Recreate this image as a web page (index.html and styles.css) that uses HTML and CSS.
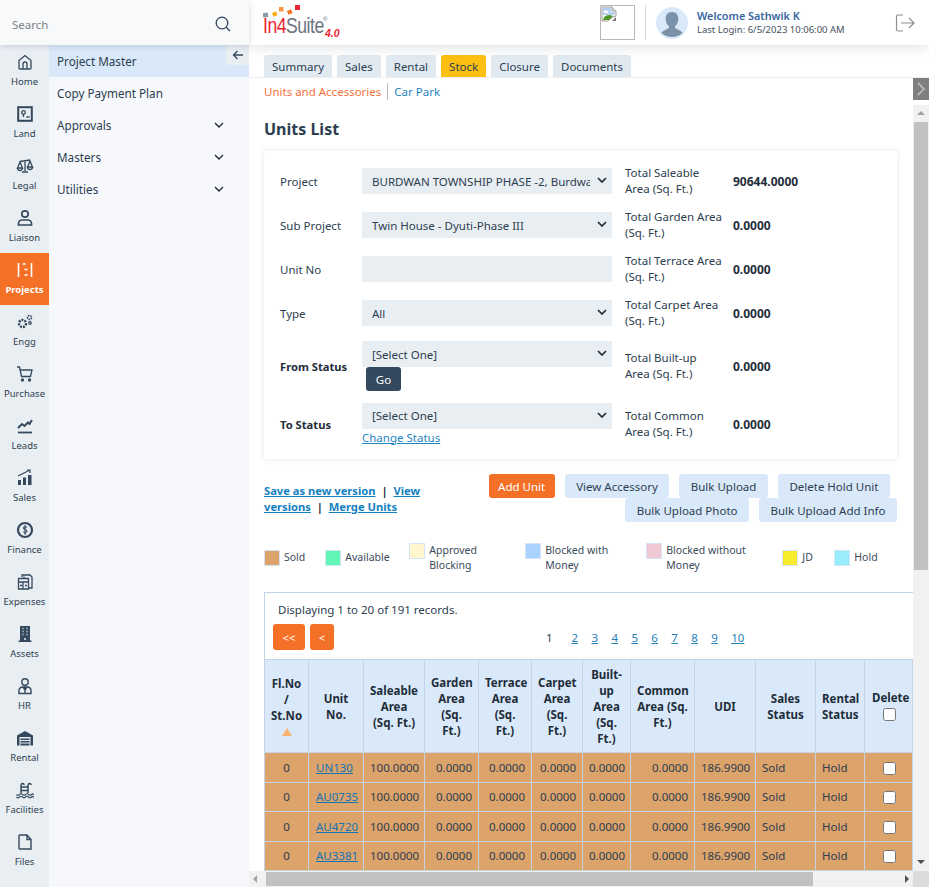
FILE: index.html
```html
<!DOCTYPE html>
<html lang="en">
<head>
    <meta charset="UTF-8">
    <title>Units List</title>
    <link rel="stylesheet" href="styles.css">
</head>
<body>
<div class="app">
    <aside class="left">
        <div class="search">
            <span class="search-text">Search</span>
            <svg class="search-icon" viewBox="0 0 16 16" width="16" height="16"><circle cx="7" cy="7" r="5.8"/><path d="M11.2 11.2 15 15"/></svg>
        </div>
        <div class="left-body">
            <nav class="rail">
                <a class="rail-item"><svg viewBox="0 0 18 18"><path d="M3 7.5 9 2.5l6 5V15a1 1 0 0 1-1 1H4a1 1 0 0 1-1-1z"/><path d="M7 16v-5a2 2 0 0 1 4 0v5"/></svg>Home</a>
                <a class="rail-item"><svg viewBox="0 0 18 18"><rect x="2.2" y="2.2" width="13.6" height="13.6" stroke-width="2"/><circle cx="7.5" cy="7.5" r="1.8"/><path d="M7.5 9.5v2.5M10.5 12h3"/></svg>Land</a>
                <a class="rail-item"><svg viewBox="0 0 18 18"><path d="M9 3v11M6 15h6M4 4.5 14 3M4 5 1.5 11h5zM14 4l-2.5 6h5z"/><path d="M1.5 11a2.5 2.5 0 0 0 5 0M11.5 10a2.5 2.5 0 0 0 5 0"/></svg>Legal</a>
                <a class="rail-item"><svg viewBox="0 0 18 18"><circle cx="9" cy="5" r="3.2" stroke-width="1.7"/><path d="M2.5 16v-1.5A3.5 3.5 0 0 1 6 11h6a3.5 3.5 0 0 1 3.5 3.5V16z" stroke-width="1.7"/></svg>Liaison</a>
                <a class="rail-item active"><svg viewBox="0 0 18 18"><path d="M2.5 2v14M15.5 2v14M6.5 3h3M8.5 8.5h3M8.5 14h3" stroke-width="1.6"/></svg>Projects</a>
                <a class="rail-item"><svg viewBox="0 0 18 18"><circle cx="6.5" cy="10.5" r="3.5" stroke-width="2.4" stroke-dasharray="2 1"/><circle cx="13.5" cy="4.5" r="2" stroke-width="1.6" stroke-dasharray="1.5 .8"/><circle cx="14" cy="10" r="1.3" stroke-width="1.2"/></svg>Engg</a>
                <a class="rail-item"><svg viewBox="0 0 18 18"><path d="M1 2h2.5l2 9.5h9L16 5H4.5"/><circle cx="6.5" cy="15" r="1" fill="#34495e"/><circle cx="13.5" cy="15" r="1" fill="#34495e"/></svg>Purchase</a>
                <a class="rail-item"><svg viewBox="0 0 18 18"><path d="M2 11l4-4 2.5 2L12 5.5l1.5 1.5L16 3" stroke-width="2"/><path d="M2 15.5h14" stroke-width="1.8"/></svg>Leads</a>
                <a class="rail-item"><svg viewBox="0 0 18 18"><path class="solid" d="M2 11h3v5H2zM7 8.5h3V16H7zM12 6h3.5v10H12z"/><path d="M2 7 8 4l5-2.5M11 1h3v3" stroke-width="1.2"/></svg>Sales</a>
                <a class="rail-item"><svg viewBox="0 0 18 18"><circle cx="9" cy="9" r="7" stroke-width="2.2"/><path d="M11 6.3C10 5.4 7.5 5.5 7.5 7c0 1.8 3.5 1.3 3.5 3.2 0 1.5-2.5 1.6-3.7.7M9 4v10" stroke-width="1.1"/></svg>Finance</a>
                <a class="rail-item"><svg viewBox="0 0 18 18"><path d="M6 4V2h8l2 2v11h-3M2.5 5.5h10V16h-10zM2.5 9h10M7 9v7M4 12.5h2M9 12.5h2M8 5V3.5" stroke-width="1.3"/></svg>Expenses</a>
                <a class="rail-item"><svg viewBox="0 0 18 18"><path class="solid" d="M4 1h10v14.5h1.5V17h-13v-1.5H4z"/><path class="holes" d="M6.5 3.5h1M10.5 3.5h1M6.5 6.5h1M10.5 6.5h1M6.5 9.5h1M10.5 9.5h1M8 14h2" stroke-width="1.3"/></svg>Assets</a>
                <a class="rail-item"><svg viewBox="0 0 18 18"><circle cx="9" cy="5" r="3.2" stroke-width="1.4"/><path d="M3 16.5v-3A3.5 3.5 0 0 1 6.5 10h5a3.5 3.5 0 0 1 3.5 3.5v3zM9 10v6.5M7 10l2 3 2-3" stroke-width="1.4"/></svg>HR</a>
                <a class="rail-item"><svg viewBox="0 0 18 18"><path class="solid" d="M1 16.5v-10L9 2l8 4.5v10h-2.5V8h-11v8.5z"/><path class="solid" d="M4.5 9.5h9V11h-9zM4.5 12h9v1.5h-9zM4.5 14.5h9v2h-9z"/></svg>Rental</a>
                <a class="rail-item"><svg viewBox="0 0 18 18"><path d="M5 12V4.500C5 2 8 2 8 4M12 12V4.500C12 2 15 2 15 4M5 6h7M5 9.500h7" stroke-width="1.5"/><path d="M.5 13.5q1.500 1.500 3 0t3 0 3 0 3 0 3 0 2 .5M.5 16q1.500 1.500 3 0t3 0 3 0 3 0 3 0 2 .5" stroke-width="1.1"/></svg>Facilities</a>
                <a class="rail-item"><svg viewBox="0 0 18 18"><path d="M4 2h7l4 4.5V16H4a1 1 0 0 1-1-1V3a1 1 0 0 1 1-1zM11 2v4.5h4" stroke-width="1.4"/></svg>Files</a>
            </nav>
            <nav class="submenu">
                <button class="collapse-btn"><svg viewBox="0 0 12 12" width="12" height="12"><path d="M11 6H1.500M5.500 2 1.500 6l4 4"/></svg></button>
                <a class="sub-item current">Project Master</a>
                <a class="sub-item">Copy Payment Plan</a>
                <a class="sub-item">Approvals<svg viewBox="0 0 10 6" width="10" height="6"><path d="M1 1l4 4 4-4"/></svg></a>
                <a class="sub-item">Masters<svg viewBox="0 0 10 6" width="10" height="6"><path d="M1 1l4 4 4-4"/></svg></a>
                <a class="sub-item">Utilities<svg viewBox="0 0 10 6" width="10" height="6"><path d="M1 1l4 4 4-4"/></svg></a>
            </nav>
        </div>
    </aside>

    <main class="main">
        <header class="topbar">
            <div class="logo">
                <svg class="logo-dots" viewBox="0 0 40 14" width="40" height="14">
                    <rect x="0" y="8" width="5" height="4.5" fill="#8d99ae" transform="rotate(-8 2 10)"/>
                    <rect x="9.5" y="7" width="4.5" height="4" fill="#fbb016" transform="rotate(-25 12 9)"/>
                    <rect x="16" y="2" width="4.5" height="4.5" fill="#f89a3c"/>
                    <rect x="24.5" y="5" width="4.5" height="4" fill="#f47027" transform="rotate(-25 27 7)"/>
                    <rect x="32" y="0" width="5" height="5" fill="#ee2737"/>
                </svg>
                <div class="logo-word"><span class="logo-name"><span class="logo-red">In4</span>Suite</span><sup>®</sup><em>4.0</em></div>
            </div>
            <div class="broken-img">
                <svg viewBox="0 0 16 16" width="16" height="16"><path d="M1 1h10l4 4v5l-3 1-3 2-2 2H1z" fill="#fff" stroke="#9a9a9a"/><path d="M2 2h8v4h4v3H2z" fill="#b4d0f2"/><path d="M3 6c0-2 2-2 3-1 1 0 2 1 1 2H3z" fill="#fff"/><path d="M2 14c1-5 6-6 10-4l-4 4z" fill="#4f9a23"/><path d="M11 1v4h4" fill="#e4e4e4" stroke="#9a9a9a"/><path d="M11 15h4v-4z" fill="#7c7c7c"/></svg>
            </div>
            <div class="user">
                <div class="avatar">
                    <svg viewBox="0 0 32 32" width="32" height="32"><path d="M16 5c4 0 6.5 3 6.3 7-.1 3-1.2 5.500-3 7-.6 1.500 0 2.500 2 3.300 3 1.200 4.700 2.200 5.200 3.700a15.500 15.500 0 0 1-21 0c.5-1.500 2.200-2.500 5.200-3.700 2-.8 2.600-1.800 2-3.300-1.800-1.500-2.900-4-3-7C9.500 8 12 5 16 5z"/></svg>
                </div>
                <div class="user-text">
                    <div class="welcome">Welcome Sathwik K</div>
                    <div class="last-login">Last Login: 6/5/2023 10:06:00 AM</div>
                </div>
            </div>
            <svg class="logout" viewBox="0 0 20 20" width="20" height="20"><path d="M8 2H3a1.500 1.500 0 0 0-1.500 1.500v13A1.500 1.500 0 0 0 3 18h5M6 10h13M14 5l5 5-5 5"/></svg>
        </header>

        <div class="tabs">
            <a class="tab">Summary</a>
            <a class="tab">Sales</a>
            <a class="tab">Rental</a>
            <a class="tab on">Stock</a>
            <a class="tab">Closure</a>
            <a class="tab">Documents</a>
        </div>
        <div class="subtabs">
            <a class="subtab on">Units and Accessories</a>
            <a class="subtab">Car Park</a>
            <span class="side-toggle"><svg viewBox="0 0 10 14" width="10" height="14"><path d="M2 1l6 6-6 6"/></svg></span>
        </div>

        <div class="pane">
            <div class="content">
                <h1 class="page-title">Units List</h1>

                <section class="card">
                    <div class="form-row">
                        <label>Project</label>
                        <div class="sel"><select><option>BURDWAN TOWNSHIP PHASE -2, Burdwan</option></select><svg viewBox="0 0 10 6"><path d="M1 1l4 4 4-4"/></svg></div>
                        <div class="total-label">Total Saleable Area (Sq. Ft.)</div>
                        <div class="total-value">90644.0000</div>
                    </div>
                    <div class="form-row">
                        <label>Sub Project</label>
                        <div class="sel"><select><option>Twin House - Dyuti-Phase III</option></select><svg viewBox="0 0 10 6"><path d="M1 1l4 4 4-4"/></svg></div>
                        <div class="total-label">Total Garden Area (Sq. Ft.)</div>
                        <div class="total-value">0.0000</div>
                    </div>
                    <div class="form-row">
                        <label>Unit No</label>
                        <div class="sel"><input type="text"></div>
                        <div class="total-label">Total Terrace Area (Sq. Ft.)</div>
                        <div class="total-value">0.0000</div>
                    </div>
                    <div class="form-row">
                        <label>Type</label>
                        <div class="sel"><select><option>All</option></select><svg viewBox="0 0 10 6"><path d="M1 1l4 4 4-4"/></svg></div>
                        <div class="total-label">Total Carpet Area (Sq. Ft.)</div>
                        <div class="total-value">0.0000</div>
                    </div>
                    <div class="form-row tall">
                        <label class="strong">From Status</label>
                        <div>
                            <div class="sel"><select><option>[Select One]</option></select><svg viewBox="0 0 10 6"><path d="M1 1l4 4 4-4"/></svg></div>
                            <button class="go-btn">Go</button>
                        </div>
                        <div class="total-label">Total Built-up Area (Sq. Ft.)</div>
                        <div class="total-value">0.0000</div>
                    </div>
                    <div class="form-row tall">
                        <label class="strong">To Status</label>
                        <div>
                            <div class="sel"><select><option>[Select One]</option></select><svg viewBox="0 0 10 6"><path d="M1 1l4 4 4-4"/></svg></div>
                            <a class="change-link">Change Status</a>
                        </div>
                        <div class="total-label">Total Common Area (Sq. Ft.)</div>
                        <div class="total-value">0.0000</div>
                    </div>
                </section>

                <div class="actions">
                    <div class="version-links">
                        <a>Save as new version</a> &nbsp;|&nbsp; <a>View</a> <a>versions</a> &nbsp;|&nbsp; <a>Merge Units</a>
                    </div>
                    <div class="action-btns">
                        <div class="btn-row first">
                            <button class="btn primary">Add Unit</button>
                            <button class="btn">View Accessory</button>
                            <button class="btn">Bulk Upload</button>
                            <button class="btn">Delete Hold Unit</button>
                        </div>
                        <div class="btn-row">
                            <button class="btn">Bulk Upload Photo</button>
                            <button class="btn">Bulk Upload Add Info</button>
                        </div>
                    </div>
                </div>

                <div class="legend">
                    <div class="legend-item"><i class="swatch sold"></i><span>Sold</span></div>
                    <div class="legend-item"><i class="swatch available"></i><span class="w44">Available</span></div>
                    <div class="legend-item"><i class="swatch approved"></i><span class="w76">Approved Blocking</span></div>
                    <div class="legend-item"><i class="swatch money"></i><span class="w81">Blocked with Money</span></div>
                    <div class="legend-item"><i class="swatch nomoney"></i><span class="w95">Blocked without Money</span></div>
                    <div class="legend-item"><i class="swatch jd"></i><span class="w12">JD</span></div>
                    <div class="legend-item"><i class="swatch hold"></i><span>Hold</span></div>
                </div>

                <section class="grid-panel">
                    <div class="records">Displaying 1 to 20 of 191 records.</div>
                    <div class="pager">
                        <button class="page-btn">&lt;&lt;</button>
                        <button class="page-btn narrow">&lt;</button>
                        <div class="pages">
                            <span>1</span><a>2</a><a>3</a><a>4</a><a>5</a><a>6</a><a>7</a><a>8</a><a>9</a><a>10</a>
                        </div>
                    </div>
                    <table class="units">
                        <colgroup>
                            <col class="c44"><col class="c55"><col class="c61"><col class="c54"><col class="c53"><col class="c51"><col class="c48"><col class="c64"><col class="c61"><col class="c60"><col class="c49"><col class="c48">
                        </colgroup>
                        <thead>
                            <tr>
                                <th>Fl.No / St.No<i class="sort-up"></i></th>
                                <th>Unit No.</th>
                                <th>Saleable Area (Sq. Ft.)</th>
                                <th>Garden Area (Sq. Ft.)</th>
                                <th>Terrace Area (Sq. Ft.)</th>
                                <th>Carpet Area (Sq. Ft.)</th>
                                <th>Built-up Area (Sq. Ft.)</th>
                                <th>Common Area (Sq. Ft.)</th>
                                <th>UDI</th>
                                <th>Sales Status</th>
                                <th>Rental Status</th>
                                <th>Delete<br><input type="checkbox"></th>
                            </tr>
                        </thead>
                        <tbody>
                            <tr>
                                <td class="mid">0</td><td><a>UN130</a></td><td class="num">100.0000</td><td class="num">0.0000</td><td class="num">0.0000</td><td class="num">0.0000</td><td class="num">0.0000</td><td class="num">0.0000</td><td class="num">186.9900</td><td>Sold</td><td>Hold</td><td class="mid"><input type="checkbox"></td>
                            </tr>
                            <tr>
                                <td class="mid">0</td><td><a>AU0735</a></td><td class="num">100.0000</td><td class="num">0.0000</td><td class="num">0.0000</td><td class="num">0.0000</td><td class="num">0.0000</td><td class="num">0.0000</td><td class="num">186.9900</td><td>Sold</td><td>Hold</td><td class="mid"><input type="checkbox"></td>
                            </tr>
                            <tr>
                                <td class="mid">0</td><td><a>AU4720</a></td><td class="num">100.0000</td><td class="num">0.0000</td><td class="num">0.0000</td><td class="num">0.0000</td><td class="num">0.0000</td><td class="num">0.0000</td><td class="num">186.9900</td><td>Sold</td><td>Hold</td><td class="mid"><input type="checkbox"></td>
                            </tr>
                            <tr>
                                <td class="mid">0</td><td><a>AU3381</a></td><td class="num">100.0000</td><td class="num">0.0000</td><td class="num">0.0000</td><td class="num">0.0000</td><td class="num">0.0000</td><td class="num">0.0000</td><td class="num">186.9900</td><td>Sold</td><td>Hold</td><td class="mid"><input type="checkbox"></td>
                            </tr>
                        </tbody>
                    </table>
                </section>
            </div>

            <div class="vbar">
                <i class="arrow up"></i>
                <div class="vtrack"><div class="vthumb"></div></div>
                <i class="arrow down"></i>
            </div>
            <div class="hbar">
                <i class="arrow left"></i>
                <div class="htrack"><div class="hthumb"></div></div>
                <i class="arrow right"></i>
            </div>
            <div class="corner"></div>
        </div>
    </main>
</div>
</body>
</html>
```

FILE: styles.css
```css
* {
    box-sizing: border-box;
}
html, body {
    margin: 0;
    height: 100%;
    overflow: hidden;
}
body {
    font-family: "Noto Sans", "Open Sans", sans-serif;
    font-size: 11.5px;
    color: #2c3e50;
    background: #fff;
}
a {
    cursor: pointer;
}
.app {
    display: flex;
    height: 100vh;
}

/* left column */
.left {
    width: 249px;
    flex: none;
    display: flex;
    flex-direction: column;
}
.search {
    height: 45px;
    flex: none;
    display: flex;
    align-items: center;
    justify-content: space-between;
    padding: 3px 18px 0 12px;
    background: #f8f9fb;
    box-shadow: 0 1px 6px rgba(44, 62, 80, 0.18);
    position: relative;
    z-index: 2;
}
.search-text {
    font-size: 11.5px;
    color: #7d8287;
}
.search-icon {
    fill: none;
    stroke: #34495e;
    stroke-width: 1.3;
}
.left-body {
    flex: 1;
    display: flex;
    min-height: 0;
}
.rail {
    width: 49px;
    flex: none;
    background: #e9eef3;
}
.rail-item {
    height: 52px;
    display: flex;
    flex-direction: column;
    align-items: center;
    padding-top: 8px;
    font-size: 9.5px;
    line-height: 14px;
    color: #2c3e50;
}
.rail-item svg {
    width: 18px;
    height: 18px;
    margin-bottom: 3.5px;
    fill: none;
    stroke: #34495e;
    stroke-width: 1.3;
}
.rail-item svg .solid {
    fill: #34495e;
    stroke: none;
}
.rail-item svg .holes {
    stroke: #e9eef3;
}
.rail-item.active {
    background: #f47027;
    color: #fff;
    font-weight: 700;
}
.rail-item.active svg {
    stroke: #fff;
}
.submenu {
    flex: 1;
    background: #f6f8fb;
    position: relative;
}
.collapse-btn {
    position: absolute;
    top: 0;
    right: 0;
    width: 23px;
    height: 20px;
    padding: 0;
    border: none;
    background: #e9eef3;
    display: flex;
    align-items: center;
    justify-content: center;
}
.collapse-btn svg {
    fill: none;
    stroke: #34495e;
    stroke-width: 1.3;
}
.sub-item {
    height: 32px;
    display: flex;
    align-items: center;
    justify-content: space-between;
    padding: 0 25px 0 8px;
    font-size: 11.7px;
    color: #2c3e50;
}
.sub-item.current {
    background: #d9e9fa;
}
.sub-item svg {
    fill: none;
    stroke: #1f2d3a;
    stroke-width: 1.4;
}

/* right column */
.main {
    flex: 1;
    min-width: 0;
    display: flex;
    flex-direction: column;
}
.topbar {
    height: 45px;
    flex: none;
    display: flex;
    align-items: center;
    padding: 0 14px;
    background: #fff;
    box-shadow: 0 2px 12px rgba(44, 62, 80, 0.16);
    position: relative;
    z-index: 1;
}
.logo {
    width: 337px;
    align-self: flex-start;
    padding-top: 5px;
}
.logo-dots {
    display: block;
}
.logo-word {
    font-family: "Liberation Sans", sans-serif;
    line-height: 18px;
    color: #6d7480;
    position: relative;
    margin-top: -2px;
    width: 90px;
    height: 18px;
}
.logo-name {
    display: inline-block;
    font-size: 21.5px;
    letter-spacing: -0.6px;
    transform: scaleX(0.82);
    transform-origin: left center;
}
.logo-red {
    color: #ed1c2e;
}
.logo-word sup {
    position: absolute;
    left: 60px;
    top: -2px;
    font-size: 6px;
    line-height: 8px;
}
.logo-word em {
    position: absolute;
    left: 62px;
    top: 10px;
    font-size: 10.5px;
    line-height: 12px;
    font-weight: 700;
    color: #ed1c2e;
}
.broken-img {
    width: 35px;
    height: 35px;
    flex: none;
    border: 1px solid #b8b8b8;
}
.broken-img svg {
    display: block;
}
.user {
    height: 35px;
    flex: 1;
    margin-left: 10px;
    padding-left: 10px;
    border-left: 1px solid #d5d8db;
    display: flex;
    align-items: center;
    gap: 9px;
}
.avatar {
    width: 32px;
    height: 32px;
    border-radius: 50%;
    background: #d9e9fa;
    overflow: hidden;
}
.avatar svg {
    display: block;
    fill: #7b92a8;
}
.welcome {
    font-size: 10.8px;
    line-height: 15px;
    font-weight: 600;
    color: #38659f;
}
.last-login {
    font-size: 9.5px;
    line-height: 14px;
    color: #44505c;
}
.logout {
    fill: none;
    stroke: #8a8f94;
    stroke-width: 1.2;
}
.tabs {
    height: 33px;
    flex: none;
    display: flex;
    align-items: flex-end;
    gap: 5px;
    padding-left: 15px;
    border-bottom: 1px solid #eceff2;
}
.tab {
    height: 22px;
    padding: 0 8px;
    display: flex;
    align-items: center;
    background: #e1e9f1;
    border-radius: 3px 3px 0 0;
    font-size: 11.5px;
    color: #2c3e50;
}
.tab.on {
    background: #fdbf12;
}
.subtabs {
    height: 27px;
    flex: none;
    display: flex;
    align-items: flex-start;
    padding: 5px 0 0 15px;
    position: relative;
}
.subtab {
    height: 17px;
    line-height: 17px;
    color: #1f86c4;
    padding-left: 6px;
}
.subtab.on {
    color: #f4703a;
    padding: 0 6px 0 0;
    border-right: 1px solid #b9bec3;
}
.side-toggle {
    position: absolute;
    right: 0;
    top: 0;
    width: 16px;
    height: 22px;
    background: #7f7f7f;
    display: flex;
    align-items: center;
    justify-content: center;
}
.side-toggle svg {
    fill: none;
    stroke: #b5b5b5;
    stroke-width: 2;
}

/* scrolling pane, scrollbars are drawn by hand so the cut off table stays put */
.pane {
    flex: 1;
    min-height: 0;
    display: grid;
    grid-template-columns: 1fr 16px;
    grid-template-rows: 1fr 16px;
}
.content {
    min-width: 0;
    min-height: 0;
    overflow: hidden;
    padding-left: 15px;
}
.page-title {
    margin: 13px 0 0;
    font-size: 16px;
    line-height: 22px;
    font-weight: 700;
    color: #2c3e50;
}
.card {
    width: 633px;
    height: 308px;
    margin-top: 11px;
    padding: 8px 16px;
    background: #fff;
    box-shadow: 0 0 6px rgba(44, 62, 80, 0.13);
    border-radius: 2px;
}
.form-row {
    display: grid;
    grid-template-columns: 82px 250px 121px 1fr;
    align-items: center;
    height: 44px;
}
.form-row.tall {
    height: 62px;
}
.form-row.tall:last-child {
    height: 54px;
}
.form-row label {
    color: #2c3e50;
}
.form-row label.strong {
    font-size: 11.2px;
    font-weight: 700;
    color: #1f2d3a;
}
.sel {
    position: relative;
    height: 26px;
}
.sel select, .sel input {
    width: 100%;
    height: 26px;
    border: none;
    border-radius: 0;
    outline: none;
    appearance: none;
    padding: 0 22px 0 10px;
    background: #e9eef3;
    font: inherit;
    color: #2c3e50;
}
.sel svg {
    position: absolute;
    right: 5px;
    top: 9px;
    width: 10px;
    height: 6px;
    fill: none;
    stroke: #1f2d3a;
    stroke-width: 1.7;
}
.total-label {
    margin-left: 13px;
    width: 97px;
    line-height: 16px;
    color: #2c3e50;
}
.total-value {
    font-size: 12px;
    font-weight: 700;
    color: #1f2d3a;
}
.go-btn {
    display: block;
    margin-left: 4px;
    height: 24px;
    width: 35px;
    padding: 0;
    border: none;
    border-radius: 3px;
    background: #34495e;
    color: #fff;
    font: inherit;
}
.change-link {
    display: block;
    margin-top: 1px;
    line-height: 16px;
    color: #1f86c4;
    text-decoration: underline;
}
.actions {
    display: flex;
    justify-content: space-between;
    margin-top: 15px;
    width: 633px;
}
.version-links {
    width: 175px;
    padding-top: 9px;
    font-size: 11.2px;
    font-weight: 700;
    line-height: 16px;
    color: #1f2d3a;
}
.version-links a {
    color: #1480bf;
    text-decoration: underline;
}
.btn-row {
    display: flex;
    justify-content: flex-end;
    gap: 10px;
}
.btn-row.first {
    padding-right: 7px;
}
.btn {
    height: 24px;
    padding: 0 11.5px;
    border: none;
    border-radius: 3px;
    background: #d9e9fa;
    color: #2c3e50;
    font: inherit;
}
.btn.primary {
    padding: 0 9.5px;
    background: #f47027;
    color: #fff;
}
.legend {
    display: flex;
    align-items: center;
    gap: 20px;
    margin-top: 21px;
    height: 30px;
    font-size: 10.5px;
    line-height: 15px;
}
.legend-item {
    display: flex;
    align-items: flex-start;
    gap: 4px;
}
.swatch {
    width: 16px;
    height: 16px;
    flex: none;
    border: 1px solid #d5e4f5;
}
.sold { background: #dca36a; }
.available { background: #62f5b6; }
.approved { background: #fff6d0; }
.money { background: #aad2ff; }
.nomoney { background: #efc8d4; }
.jd { background: #f8ea2c; }
.hold { background: #98ecfc; }
.w12 { width: 12px; }
.w44 { width: 44px; }
.w76 { width: 76px; }
.w81 { width: 81px; }
.w95 { width: 96px; }
.legend-item span {
    color: #3a4a5a;
}
.grid-panel {
    margin-top: 19px;
    width: 649px;
    border: 1px solid #c3d4e4;
    border-right: none;
    border-bottom: none;
}
.records {
    padding: 9px 13px 0;
    line-height: 16px;
}
.pager {
    display: flex;
    align-items: center;
    gap: 5px;
    height: 26px;
    margin: 6px 0 9px 8px;
}
.page-btn {
    width: 32px;
    height: 26px;
    padding: 0;
    border: none;
    border-radius: 3px;
    background: #f47027;
    color: #fff;
    font: inherit;
}
.page-btn.narrow {
    width: 24px;
}
.pages {
    display: flex;
    gap: 13.4px;
    margin-left: 207px;
}
.pages span {
    margin-right: 5.5px;
}
.pages a {
    color: #1f7fb8;
    text-decoration: underline;
}
.units {
    table-layout: fixed;
    width: 648px;
    margin-left: -1px;
    border-collapse: collapse;
}
.c44 { width: 44px; }
.c55 { width: 55px; }
.c61 { width: 61px; }
.c54 { width: 54px; }
.c53 { width: 53px; }
.c51 { width: 51px; }
.c48 { width: 48px; }
.c64 { width: 64px; }
.c60 { width: 60px; }
.c49 { width: 49px; }
.units th {
    height: 93px;
    padding: 4px 6px 2px;
    background: #d9e9fa;
    border: 1px solid #c3d4e4;
    line-height: 16px;
    font-weight: 700;
    color: #1f2d3a;
    vertical-align: middle;
    text-align: center;
}
.units th:last-child, .units td:last-child {
    padding-left: 7px;
    padding-right: 5px;
}
.units th input {
    margin: 2px 0 0;
}
.sort-up {
    display: block;
    width: 0;
    margin: 4px auto 2px;
    border-left: 5px solid transparent;
    border-right: 5px solid transparent;
    border-bottom: 8px solid #f9b26b;
}
.units td {
    height: 29.5px;
    padding: 0 6px;
    background: #dca36a;
    border: 1px solid #c3d4e4;
    color: #2c3e50;
    white-space: nowrap;
}
.units td.num {
    text-align: right;
}
.units td.mid {
    text-align: center;
}
.units td a {
    margin-left: 1px;
    color: #1473b5;
    text-decoration: underline;
}
.units td input {
    display: block;
    margin: 2px auto 0;
}

/* hand drawn scrollbars */
.vbar {
    background: #f1f1f1;
    display: flex;
    flex-direction: column;
}
.vtrack {
    flex: 1;
}
.vthumb {
    height: 448px;
    margin: 0 1px;
    background: #c1c1c1;
}
.hbar {
    background: #f1f1f1;
    display: flex;
}
.htrack {
    flex: 1;
    padding: 1px 0;
}
.hthumb {
    width: 547px;
    height: 14px;
    background: #c1c1c1;
}
.corner {
    background: #dcdcdc;
}
.arrow {
    flex: none;
    width: 16px;
    height: 17px;
    position: relative;
    display: block;
}
.arrow::before {
    content: "";
    position: absolute;
    left: 4px;
    top: 6px;
    border: 4px solid transparent;
}
.arrow.up::before {
    top: 2px;
    border-bottom-color: #a3a3a3;
}
.arrow.down::before {
    top: 6px;
    border-top-color: #505050;
}
.arrow.left, .arrow.right {
    height: 16px;
}
.arrow.left {
    width: 17px;
}
.arrow.left::before {
    left: 0;
    top: 4px;
    border-right-color: #a3a3a3;
}
.arrow.right::before {
    left: 8px;
    top: 4px;
    border-left-color: #505050;
}
```
